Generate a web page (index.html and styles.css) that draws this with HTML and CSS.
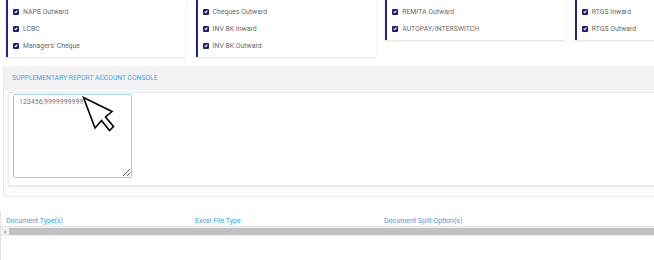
FILE: index.html
```html
<!DOCTYPE html>
<html>
<head>
<meta charset="utf-8">
<title>Supplementary report</title>
<link rel="stylesheet" href="styles.css">
</head>
<body>
<div class="pagina">
  <div class="grupos">
    <div class="grupo">
      <div class="opcion"><span class="caja"></span>NAPS Outward</div>
      <div class="opcion"><span class="caja"></span>LCBC</div>
      <div class="opcion"><span class="caja"></span>Managers' Cheque</div>
    </div>
    <div class="grupo">
      <div class="opcion"><span class="caja"></span>Cheques Outward</div>
      <div class="opcion"><span class="caja"></span>INV BK Inward</div>
      <div class="opcion"><span class="caja"></span>INV BK Outward</div>
    </div>
    <div class="grupo">
      <div class="opcion"><span class="caja"></span>REMITA Outward</div>
      <div class="opcion"><span class="caja"></span>AUTOPAY/INTERSWITCH</div>
    </div>
    <div class="grupo">
      <div class="opcion"><span class="caja"></span>RTGS Inward</div>
      <div class="opcion"><span class="caja"></span>RTGS Outward</div>
    </div>
  </div>

  <div class="panel">
    <div class="panel-titulo">SUPPLEMENTARY REPORT ACCOUNT CONSOLE</div>
    <div class="panel-cuerpo">
      <textarea class="cuentas">123456,9999999999</textarea>
    </div>
  </div>

  <div class="tabla">
    <div class="cabecera">
      <span>Document Type(s)</span>
      <span>Excel File Type</span>
      <span>Document Split Option(s)</span>
    </div>
    <div class="barra"><span class="flecha"></span><span class="pulgar"></span></div>
  </div>

  <svg class="cursor" width="36" height="38" viewBox="0 0 36 38">
    <path d="M1.5 1.5 L13 32 L19.5 24.5 L27.5 34.5 L31.5 30.5 L23.5 21 L30 15.5 Z" fill="#fff" stroke="#000" stroke-width="1.6" stroke-linejoin="miter"/>
  </svg>
</div>
</body>
</html>
```

FILE: styles.css
```css
/* pantalla de reportes suplementarios */

body {margin: 0; font-family: Roboto, Arial, sans-serif; background: #fff; overflow: hidden;}
.pagina {position: relative; width: 654px; height: 260px; overflow: hidden;}

.grupos {display: flex; gap: 9.6px; padding-left: 6px; align-items: flex-start;}
.grupo {flex: 0 0 180px; background: #fff; border-left: 2px solid #23238c; box-shadow: 0 1px 2px rgba(0,0,0,0.13); padding: 3px 0 3px 5px; box-sizing: border-box;}
.opcion {display: flex; align-items: center; height: 17px; font-size: 6.9px; color: #6a6a6a;}
.caja {width: 6px; height: 6px; background: #1e1e7a; border-radius: 1px; margin-right: 4px; position: relative;}
.caja::after {content: ""; position: absolute; left: 2px; top: 1px; width: 1px; height: 2px; border: solid #fff; border-width: 0 1px 1px 0; transform: rotate(40deg);}

.panel {margin: 9px 0 0 3px; background: #fbfbfb; border-left: 1px solid #ececec; border-bottom: 1px solid #ececec; padding-bottom: 10px;}
.panel-titulo {background: #f2f2f2; height: 24px; line-height: 24px; padding-left: 8px; font-size: 6.75px; color: #45a5ec;}
.panel-cuerpo {margin: 2px 0 0 4px; background: #fff; border: 1px solid #ececec; border-right: 0; box-shadow: 0 1px 1px rgba(0,0,0,0.05); padding: 1px 0 7px 4px;}
.cuentas {display: block; width: 119px; height: 84px; box-sizing: border-box; margin: 0; border: 1px solid #9fcdf2; border-radius: 2px; padding: 3px 5px; font-family: Roboto, Arial, sans-serif; font-size: 7px; color: #777; resize: both;}

.tabla {margin-top: 14px; border-left: 1px solid #e3e3e3; height: 70px;}
.cabecera {display: flex; padding: 0 0 1px 5px; height: 14px; align-items: flex-end; font-size: 7px; line-height: 8px; color: #3a9ee6;}
.cabecera span {flex: 0 0 189px;}
.barra {display: flex; align-items: center; height: 9px; background: #f1f1f1; border-top: 1px solid #e6e6e6;}
.flecha {width: 0; height: 0; margin: 0 3px 0 3px; border-top: 2px solid transparent; border-bottom: 2px solid transparent; border-right: 2px solid #a0a0a0;}
.pulgar {flex: 1; height: 7px; background: #c1c1c1;}

.cursor {position: absolute; left: 82px; top: 96px;}
```
